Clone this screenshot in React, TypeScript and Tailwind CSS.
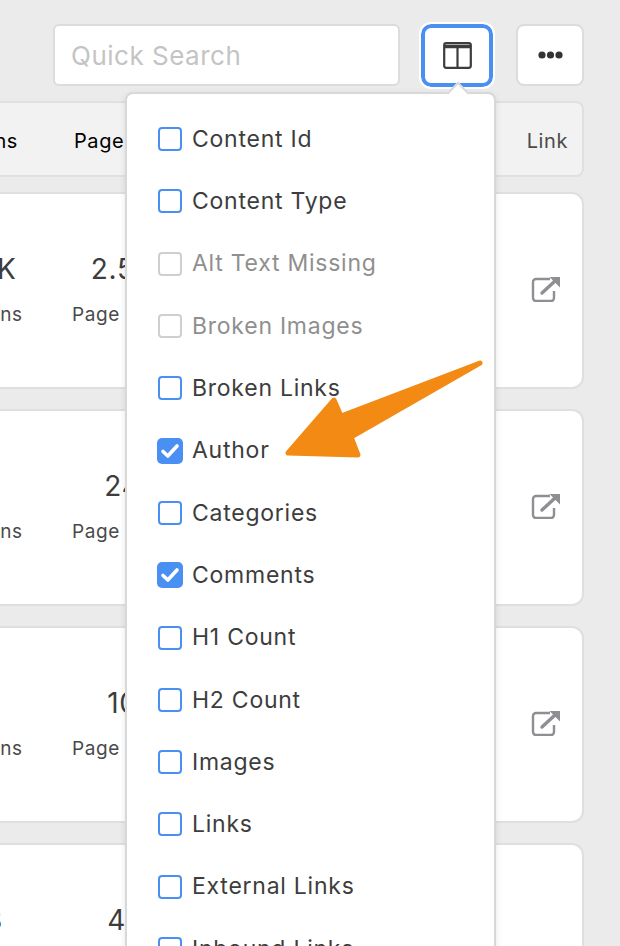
const columns = [
  { label: 'Content Id' },
  { label: 'Content Type' },
  { label: 'Alt Text Missing', disabled: true },
  { label: 'Broken Images', disabled: true },
  { label: 'Broken Links' },
  { label: 'Author', checked: true },
  { label: 'Categories' },
  { label: 'Comments', checked: true },
  { label: 'H1 Count' },
  { label: 'H2 Count' },
  { label: 'Images' },
  { label: 'Links' },
  { label: 'External Links' },
  { label: 'Inbound Links' },
];

const rows = [
  { first: '9.5K', second: '2.5K', link: true },
  { first: '12', second: '24', link: true },
  { first: '9', second: '10', link: true },
  { first: '63', second: '41', link: false },
];

function ColumnOption({ label, checked, disabled }: { label: string; checked?: boolean; disabled?: boolean }) {
  return (
    <div className="flex h-[62.3px] items-center">
      <div className="flex w-[65px] shrink-0 justify-center pl-[21px]">
        {checked ? (
          <div className="flex h-[26px] w-[26px] items-center justify-center rounded-[5px] bg-[#4a90f2]">
            <svg width="20" height="20" viewBox="0 0 20 20" fill="none">
              <path d="M3 10.5L7.8 15L17 5" stroke="#fff" strokeWidth="3.6" strokeLinecap="round" strokeLinejoin="round" />
            </svg>
          </div>
        ) : (
          <div
            className={
              disabled
                ? 'h-[24px] w-[24px] rounded-[4px] border-2 border-[#cfcfcf] bg-white'
                : 'h-[24px] w-[24px] rounded-[4px] border-2 border-[#4a90f2] bg-white'
            }
          />
        )}
      </div>
      <span className={disabled ? 'text-[#8f8f8f]' : 'text-[#3d3d3d]'}>{label}</span>
    </div>
  );
}

export default function App() {
  return (
    <div
      className="relative h-[946px] w-[620px] overflow-hidden bg-[#ebebeb] text-[23px] tracking-[0.75px]"
      style={{ fontFamily: '"Inter", "Liberation Sans", sans-serif' }}
    >
      {/* toolbar */}
      <div className="flex h-[101px] items-start justify-end pr-[36px] pt-[24px]">
        <div className="flex h-[62px] w-[347px] items-center rounded-[6px] border-2 border-[#dcdcdc] bg-white pl-[16px] text-[#c4c4c4] text-[26px] tracking-[0.5px]">
          Quick Search
        </div>
        <div className="ml-[21px] flex h-[63px] w-[72px] items-center justify-center rounded-[10px] border-[4px] border-[#4a90f2] bg-white outline-2 outline-white">
          <svg width="29" height="27" viewBox="0 0 29 27" fill="none">
            <rect x="1.2" y="1.2" width="26.6" height="24.6" rx="2" stroke="#3c3c3c" strokeWidth="2.2" />
            <path d="M1 4.5h27" stroke="#3c3c3c" strokeWidth="3.5" />
            <path d="M14.5 4v22" stroke="#3c3c3c" strokeWidth="2.2" />
          </svg>
        </div>
        <div className="ml-[23px] flex h-[62px] w-[68px] items-center justify-center rounded-[8px] border-2 border-[#dcdcdc] bg-white">
          <svg width="25" height="8" viewBox="0 0 25 8" fill="#333">
            <circle cx="4" cy="4" r="3.6" />
            <circle cx="12.5" cy="4" r="3.6" />
            <circle cx="21" cy="4" r="3.6" />
          </svg>
        </div>
      </div>

      {/* table header */}
      <div className="mr-[36px] ml-[-20px] flex h-[76px] items-center rounded-[8px] border-2 border-[#e0e0e0] bg-[#f2f2f2] pt-[3px] text-[20px] tracking-[0.6px]">
        <span className="w-[36px] text-right text-black">ns</span>
        <span className="ml-[56px] text-black">Page Views</span>
        <span className="ml-auto pr-[14px] text-[#4a4a4a]">Link</span>
      </div>

      {/* rows */}
      <div className="mr-[36px] ml-[-40px] mt-[15px] flex flex-col gap-[20px]">
        {rows.map((row) => (
          <div
            key={row.second}
            className="flex h-[197px] items-center rounded-[12px] border-2 border-[#dfdfdf] bg-white"
          >
            <div className="mb-[3px] flex w-[66px] flex-col items-end">
              <div className="flex w-[96px] flex-col items-center gap-[11px]">
                <span className="pl-[10px] text-[28px] text-[#3d3d3d]">{row.first}</span>
                <span className="text-[#4a4a4a] text-[19px] tracking-[0.6px]">Sessions</span>
              </div>
            </div>
            <div className="mb-[3px] ml-[44px] flex flex-col items-center gap-[11px]">
              <span className="pr-[10px] text-[28px] text-[#3d3d3d]">{row.second}</span>
              <span className="text-[#4a4a4a] text-[19px] tracking-[0.6px]">Page Views</span>
            </div>
            {row.link && (
              <div className="ml-auto mb-[3px] pr-[21px]">
                <svg width="30" height="26" viewBox="0 0 30 26" fill="none">
                  <path d="M19 3H5a3 3 0 0 0-3 3v16a3 3 0 0 0 3 3h15a3 3 0 0 0 3-3v-7" stroke="#8e8e93" strokeWidth="2.4" />
                  <path d="M11 17L24 5" stroke="#8e8e93" strokeWidth="3.4" strokeLinecap="round" />
                  <path d="M18.5 1H29V11.5Z" fill="#8e8e93" />
                </svg>
              </div>
            )}
          </div>
        ))}
      </div>

      {/* columns dropdown */}
      <div className="absolute left-[125px] top-[92px] w-[371px] rounded-[8px] border-2 border-[#d8d8d8] bg-white py-[14px] shadow-[0_2px_6px_rgba(0,0,0,0.1)]">
        <div className="absolute left-[323px] top-[-9px] h-[16px] w-[16px] rotate-45 border-l-2 border-t-2 border-[#d8d8d8] bg-white" />
        {columns.map((col) => (
          <ColumnOption key={col.label} label={col.label} checked={col.checked} disabled={col.disabled} />
        ))}
      </div>

      {/* annotation arrow */}
      <svg className="absolute left-0 top-0" width="620" height="946" viewBox="0 0 620 946" fill="none">
        <path
          d="M480 363L341 416L334 400L288 453L358 455L351 437Z"
          fill="#f28a14"
          stroke="#f28a14"
          strokeWidth="5"
          strokeLinejoin="round"
        />
      </svg>
    </div>
  );
}
